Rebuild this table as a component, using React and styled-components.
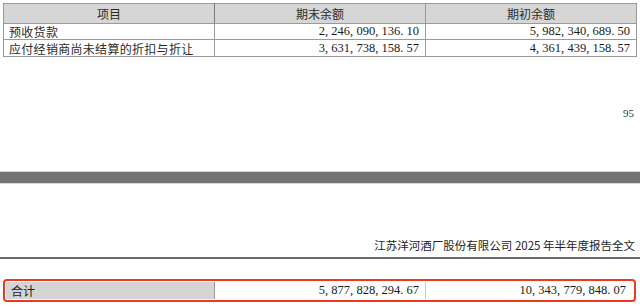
import React from 'react'
import styled, { createGlobalStyle } from 'styled-components'

const GlobalStyle = createGlobalStyle`
  html, body { margin: 0; padding: 0; background: #ffffff; }
  body { font-family: "Liberation Serif", "Noto Sans CJK SC", serif; color: #1a1a1a; }
`

const rows = [
  { name: '预收货款', end: '2,246,090,136.10', start: '5,982,340,689.50' },
  { name: '应付经销商尚未结算的折扣与折让', end: '3,631,738,158.57', start: '4,361,439,158.57' },
]

// SimSun style numbers: punctuation takes a full half-width cell
function Num({ value }) {
  const parts = value.split(/([,.])/)
  return (
    <>
      {parts.map((p, i) =>
        p === ',' || p === '.' ? <Punct key={i}>{p}</Punct> : <span key={i}>{p}</span>
      )}
    </>
  )
}

export default function App() {
  return (
    <>
      <GlobalStyle />
      <Page>
        <TableWrap>
          <Table>
            <colgroup>
              <col style={{ width: 211 }} />
              <col style={{ width: 211 }} />
              <col style={{ width: 211 }} />
            </colgroup>
            <thead>
              <tr>
                <HeadCell>项目</HeadCell>
                <HeadCell>期末余额</HeadCell>
                <HeadCell>期初余额</HeadCell>
              </tr>
            </thead>
            <tbody>
              {rows.map((r, i) => (
                <tr key={r.name}>
                  <NameCell tall={i === 1}>{r.name}</NameCell>
                  <NumCell tall={i === 1}><Num value={r.end} /></NumCell>
                  <NumCell tall={i === 1}><Num value={r.start} /></NumCell>
                </tr>
              ))}
            </tbody>
          </Table>
        </TableWrap>

        <PageNumber>95</PageNumber>

        <PageGap />

        <RunningHeader>江苏洋河酒厂股份有限公司 2025 年半年度报告全文</RunningHeader>

        <TotalWrap>
          <TotalBox>
            <TotalLabel>合计</TotalLabel>
            <TotalValue><Num value="5,877,828,294.67" /></TotalValue>
            <TotalValue last><Num value="10,343,779,848.07" /></TotalValue>
          </TotalBox>
        </TotalWrap>
      </Page>
    </>
  )
}

const Page = styled.div`
  width: 640px;
  height: 308px;
  overflow: hidden;
  display: flex;
  flex-direction: column;
`

const TableWrap = styled.div`
  padding: 3px 4px 0 3px;
`

const Table = styled.table`
  width: 633px;
  border-collapse: collapse;
  table-layout: fixed;
  font-size: 12px;
  td, th { border: 1px solid #9a9a9a; }
`

const HeadCell = styled.th`
  height: 19px;
  padding: 0;
  background: #d6d6d6;
  font-weight: 400;
  text-align: center;
  line-height: 19px;
  color: #2a2a2a;
  font-family: "Noto Sans CJK SC", sans-serif;
  &:first-child { border-right: 1px solid #7a7a7a; }
`

const NameCell = styled.td`
  height: ${p => (p.tall ? 16 : 15)}px;
  padding: 0 0 0 5px;
  line-height: 15px;
  font-family: "Noto Sans CJK SC", sans-serif;
  letter-spacing: 0.3px;
  color: #2a2a2a;
  white-space: nowrap;
`

const NumCell = styled.td`
  height: ${p => (p.tall ? 16 : 15)}px;
  padding: 0 6px 0 0;
  line-height: 15px;
  text-align: right;
  font-size: 12.5px;
  white-space: nowrap;
`

const Punct = styled.span`
  margin-right: 3.2px;
`

const PageNumber = styled.div`
  margin-top: 50px;
  padding-right: 6px;
  text-align: right;
  font-size: 11px;
  line-height: 12px;
  color: #333;
`

const PageGap = styled.div`
  margin-top: 52px;
  height: 11px;
  background: #747474;
  border-top: 1px solid #d2d2d2;
  border-bottom: 1px solid #d8d8d8;
`

const RunningHeader = styled.div`
  margin-top: 54px;
  padding: 0 5px 4px 0;
  text-align: right;
  font-family: "Noto Sans CJK SC", sans-serif;
  font-size: 11.5px;
  line-height: 15px;
  color: #222;
  border-bottom: 2px solid #6a6a6a;
`

const TotalWrap = styled.div`
  margin-top: 20px;
  padding: 0 4px 0 3px;
`

const TotalBox = styled.div`
  display: grid;
  grid-template-columns: 209px 211px 1fr;
  height: 17px;
  border: 2px solid #ec3a22;
  border-radius: 4px;
  padding: 1px;
  font-size: 12px;
`

const TotalLabel = styled.div`
  background: #d4d4d4;
  padding-left: 5px;
  line-height: 17px;
  font-family: "Noto Sans CJK SC", sans-serif;
  border-right: 1px solid #9a9a9a;
`

const TotalValue = styled.div`
  text-align: right;
  padding-right: ${p => (p.last ? 7 : 6)}px;
  line-height: 17px;
  font-size: 12.5px;
  border-right: ${p => (p.last ? 'none' : '1px solid #c8c8c8')};
`
